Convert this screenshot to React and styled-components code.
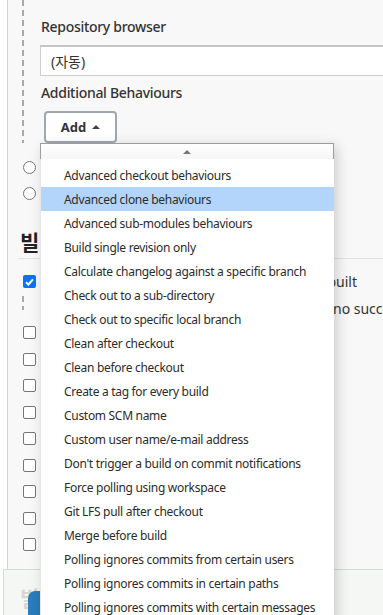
import React from "react";
import styled, { createGlobalStyle } from "styled-components";

const Global = createGlobalStyle`
  html, body { margin: 0; padding: 0; background: #ffffff; }
  body {
    font-family: "Noto Sans", "Noto Sans CJK KR", sans-serif;
    color: #333;
    width: 383px;
    height: 615px;
    overflow: hidden;
  }
`;

const Page = styled.div`
  position: relative;
  width: 383px;
  height: 615px;
  overflow: hidden;
  background: #ffffff;
`;

const Frame = styled.div`
  margin-left: 7px;
  height: 570px;
  border-left: 1px solid #d4d4d4;
  background: #f8f8f8;
  display: flex;
  flex-direction: column;
`;

const dashes = `repeating-linear-gradient(
  to bottom,
  #a8a8a8 0px,
  #a8a8a8 6px,
  transparent 6px,
  transparent 10px
)`;

const Section = styled.div`
  margin-left: 14px;
  padding: 17px 0 0 18px;
  height: 126px;
  background-image: ${dashes};
  background-size: 2px 100%;
  background-repeat: no-repeat;
  display: flex;
  flex-direction: column;
`;

const Label = styled.div`
  margin-left: 1px;
  font-size: 14px;
  font-weight: 500;
  line-height: 20px;
  color: #333;
  letter-spacing: -0.3px;
`;

const Select = styled.div`
  margin-top: 8px;
  margin-right: -20px;
  height: 29px;
  border: 1px solid #cfcfcf;
  border-top: 2px solid #c4c4c4;
  background: #fff;
  display: flex;
  align-items: center;
  padding-left: 10px;
  font-size: 14px;
  color: #333;
`;

const LabelGap = styled(Label)`
  margin-top: 7px;
`;

const AddButton = styled.button`
  margin-top: 8px;
  margin-left: 4px;
  width: 73px;
  height: 32px;
  border: 2px solid #9fa8b1;
  border-radius: 4px;
  background: #fff;
  display: flex;
  align-items: center;
  justify-content: center;
  gap: 6px;
  font-family: "Noto Sans", sans-serif;
  font-weight: 700;
  font-size: 13px;
  color: #333;
  padding: 0;
`;

const Caret = styled.span`
  width: 0;
  height: 0;
  border-left: 4px solid transparent;
  border-right: 4px solid transparent;
  border-bottom: 4px solid #444;
`;

const Rest = styled.div`
  padding-left: 15px;
  display: flex;
  flex-direction: column;
`;

const Radio = styled.span`
  display: block;
  width: 11px;
  height: 11px;
  border: 1px solid #777;
  border-radius: 50%;
  background: #fff;
  margin-top: ${(p) => p.$mt}px;
`;

const Heading = styled.div`
  margin-top: 29px;
  margin-left: -3px;
  font-family: "Noto Sans CJK KR", sans-serif;
  font-size: 21px;
  font-weight: 700;
  line-height: 24px;
  color: #222;
`;

const Rule = styled.div`
  margin-top: 5px;
  margin-left: -5px;
  height: 1px;
  background: #e2e2e2;
`;

const CheckRow = styled.div`
  display: flex;
  align-items: center;
  height: 13px;
  margin-top: ${(p) => p.$mt}px;
`;

const Box = styled.span`
  flex: none;
  width: ${(p) => (p.$on ? 13 : 11)}px;
  height: ${(p) => (p.$on ? 13 : 11)}px;
  border: ${(p) => (p.$on ? "none" : "1px solid #767676")};
  border-radius: 2px;
  background: ${(p) => (p.$on ? "#0a74f0" : "#fff")};
  display: flex;
  align-items: center;
  justify-content: center;
`;

const RowText = styled.span`
  flex: 1;
  min-width: 0;
  margin-left: 8px;
  margin-right: 26px;
  display: flex;
  justify-content: flex-end;
  overflow: hidden;
  font-size: 14px;
  color: #333;
  white-space: nowrap;
`;

const SubRow = styled.div`
  display: flex;
  align-items: center;
  height: 14px;
  margin-top: 8px;
`;

const DashSeg = styled.div`
  flex: none;
  width: 2px;
  height: 14px;
  margin-left: -1px;
  background-image: ${dashes};
`;

const SubText = styled.span`
  margin-left: 309px;
  font-size: 14px;
  line-height: 14px;
  margin-top: 12px;
  color: #333;
  white-space: nowrap;
`;

const Sticker = styled.div`
  position: absolute;
  left: 3px;
  top: 569px;
  right: -2px;
  height: 60px;
  border: 1px solid #cfe0d3;
  background: rgba(243, 246, 242, 0.92);
`;

const StickerGhost = styled.div`
  position: absolute;
  left: 16px;
  top: 12px;
  font-family: "Noto Sans CJK KR", sans-serif;
  font-size: 21px;
  font-weight: 700;
  color: #d9d6cf;
`;

const SaveButton = styled.div`
  position: absolute;
  left: 24px;
  top: 21px;
  width: 80px;
  height: 40px;
  border-radius: 7px;
  background: linear-gradient(to right, #2b7fc0, #1565a6);
`;

const Menu = styled.div`
  position: absolute;
  left: 40px;
  top: 143px;
  width: 294px;
  height: 480px;
  box-shadow: 3px 3px 12px rgba(0, 0, 0, 0.18);
  background: #fff;
  display: flex;
  flex-direction: column;
`;

const MenuHeader = styled.div`
  height: 15px;
  border: 1px solid #9d9d9d;
  border-bottom: none;
  background: linear-gradient(#fff, #f6f6f6);
  display: flex;
  align-items: center;
  justify-content: center;
`;

const SmallCaret = styled.span`
  width: 0;
  height: 0;
  border-left: 4px solid transparent;
  border-right: 4px solid transparent;
  border-bottom: 4px solid #777;
  margin-top: 1px;
`;

const MenuList = styled.ul`
  list-style: none;
  margin: 0;
  padding: 4px 0 0 0;
  border-left: 1px solid #e6e6e6;
  flex: 1;
`;

const Item = styled.li`
  height: 24px;
  line-height: 25px;
  padding-left: 23px;
  font-size: 12px;
  letter-spacing: -0.3px;
  color: #2b2b2b;
  white-space: nowrap;
  background: ${(p) => (p.$active ? "#b4d5fb" : "transparent")};
`;

const items = [
  "Advanced checkout behaviours",
  "Advanced clone behaviours",
  "Advanced sub-modules behaviours",
  "Build single revision only",
  "Calculate changelog against a specific branch",
  "Check out to a sub-directory",
  "Check out to specific local branch",
  "Clean after checkout",
  "Clean before checkout",
  "Create a tag for every build",
  "Custom SCM name",
  "Custom user name/e-mail address",
  "Don't trigger a build on commit notifications",
  "Force polling using workspace",
  "Git LFS pull after checkout",
  "Merge before build",
  "Polling ignores commits from certain users",
  "Polling ignores commits in certain paths",
  "Polling ignores commits with certain messages",
];

const Check = () => (
  <svg width="9" height="8" viewBox="0 0 9 8">
    <path d="M1 4.2 L3.4 6.5 L8 1.3" stroke="#fff" strokeWidth="2" fill="none" />
  </svg>
);

const gaps = [16, 13.5, 13.5, 13.5, 13.5, 13.5, 13.5, 13.5, 13.5];

export default function App() {
  return (
    <Page>
      <Global />
      <Frame>
        <Section>
          <Label>Repository browser</Label>
          <Select>(자동)</Select>
          <LabelGap>Additional Behaviours</LabelGap>
          <AddButton>
            Add <Caret />
          </AddButton>
        </Section>
        <Rest>
          <Radio $mt={18} />
          <Radio $mt={13} />
          <Heading>빌</Heading>
          <Rule />
          <CheckRow $mt={16}>
            <Box $on>
              <Check />
            </Box>
            <RowText>Build whenever a SNAPSHOT dependency is built</RowText>
          </CheckRow>
          <SubRow>
            <DashSeg />
            <SubText>no successful build</SubText>
          </SubRow>
          {gaps.map((g, i) => (
            <CheckRow key={i} $mt={g}>
              <Box />
            </CheckRow>
          ))}
        </Rest>
      </Frame>
      <Sticker>
        <StickerGhost>빌</StickerGhost>
        <SaveButton />
      </Sticker>
      <Menu>
        <MenuHeader>
          <SmallCaret />
        </MenuHeader>
        <MenuList>
          {items.map((t, i) => (
            <Item key={t} $active={i === 1}>
              {t}
            </Item>
          ))}
        </MenuList>
      </Menu>
    </Page>
  );
}
